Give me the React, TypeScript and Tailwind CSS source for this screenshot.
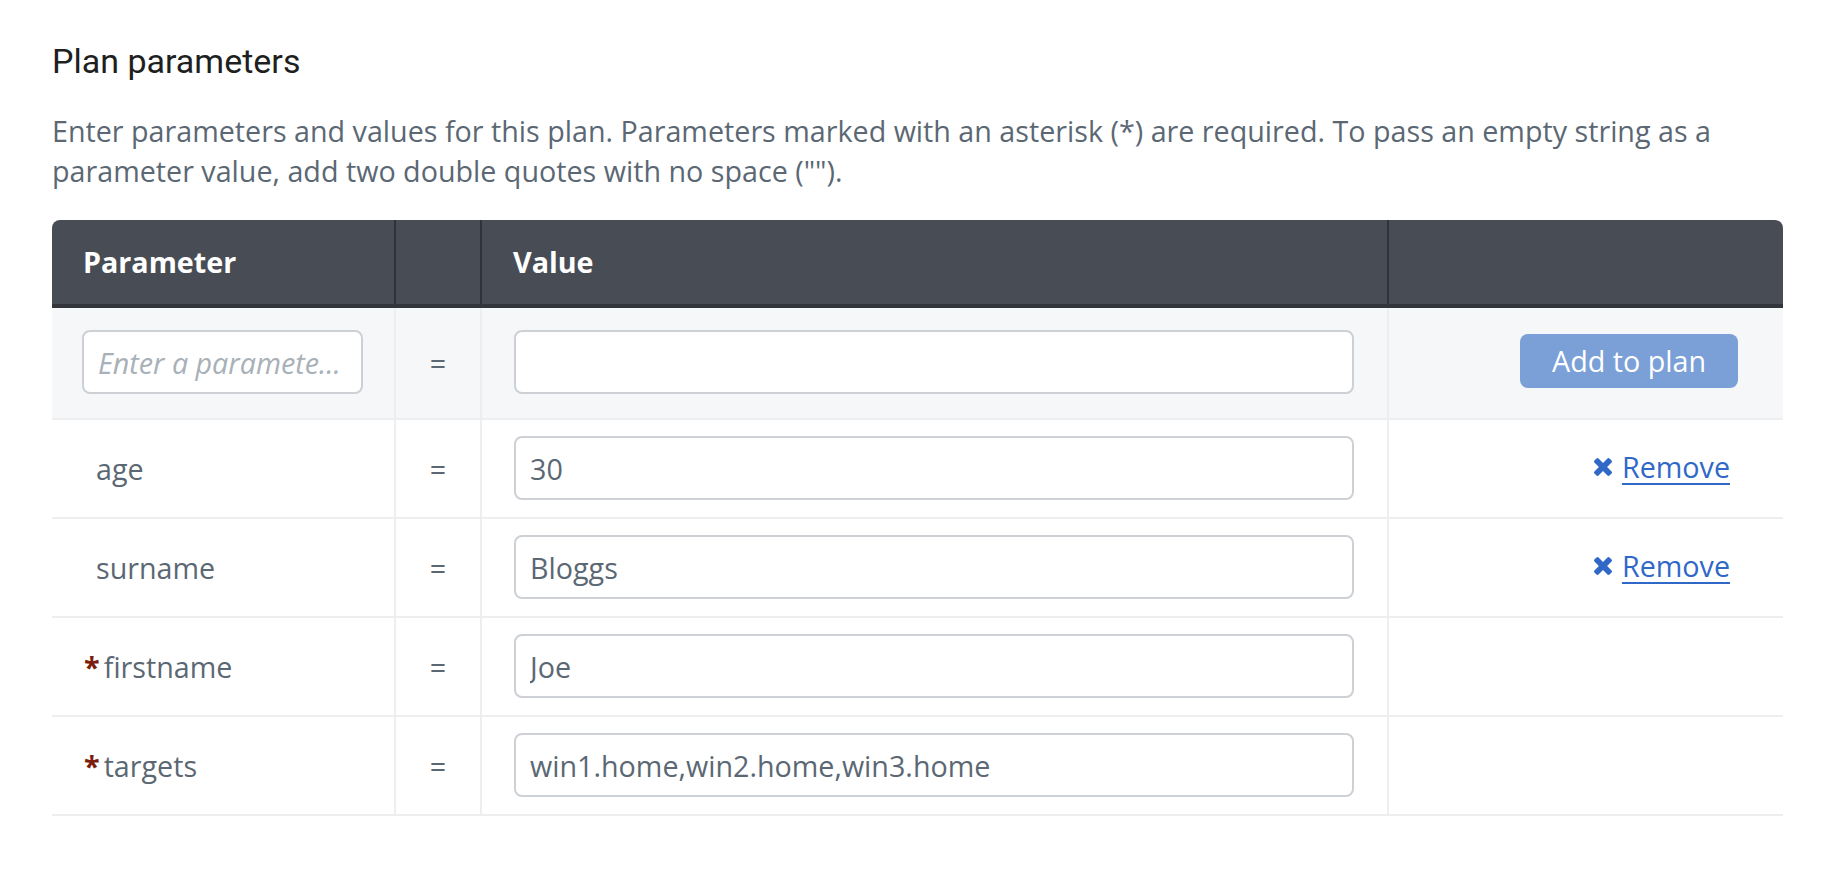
import React from 'react';

interface PlanParam {
  name: string
  value: string
  required?: boolean
  removable?: boolean
}

const params: PlanParam[] = [
  { name: 'age', value: '30', removable: true },
  { name: 'surname', value: 'Bloggs', removable: true },
  { name: 'firstname', value: 'Joe', required: true },
  { name: 'targets', value: 'win1.home,win2.home,win3.home', required: true },
];

const inputCls =
  'w-full h-[64px] bg-white border-2 border-[#cdd1d5] rounded-[8px] px-[14px] text-[28.7px] text-[#5b6874] outline-none';

// heavy "times" glyph
const TimesIcon = () => (
  <svg viewBox="110 104 1188 1188" className="w-[18px] h-[18px]" fill="currentColor">
    <path d="M1298 1060q0 40-28 68l-136 136q-28 28-68 28t-68-28l-294-294-294 294q-28 28-68 28t-68-28l-136-136q-28-28-28-68t28-68l294-294-294-294q-28-28-28-68t28-68l136-136q28-28 68-28t68 28l294 294 294-294q28-28 68-28t68 28l136 136q28 28 28 68t-28 68l-294 294 294 294q28 28 28 68z" />
  </svg>
);

const App: React.FC = () => {
  return (
    <div className="min-h-screen bg-white font-['Open_Sans',sans-serif]">
      <div className="ml-[52px] w-[1731px]">
        <h2 className="pt-[41px] text-[34px] leading-[40px] text-[#1e1f21] font-['Roboto',sans-serif]">
          Plan parameters
        </h2>
        <p className="mt-[30px] text-[28.7px] leading-[40px] text-[#5b6874]">
          Enter parameters and values for this plan. Parameters marked with an asterisk (*) are required. To pass an
          empty string as a parameter value, add two double quotes with no space ("").
        </p>

        <div className="mt-[29px] rounded-t-[8px] overflow-hidden">
          <div className="grid grid-cols-[344px_86px_907px_394px] h-[88px] bg-[#484d55] border-b-4 border-[#32363c] text-white font-bold text-[28.7px]">
            <div className="flex items-center pl-[31px] border-r-2 border-[#30343a]">Parameter</div>
            <div className="border-r-2 border-[#30343a]" />
            <div className="flex items-center pl-[31px] border-r-2 border-[#30343a]">Value</div>
            <div />
          </div>

          <div className="grid grid-cols-[344px_86px_907px_394px] bg-[#f6f7f9] border-b-2 border-[#eceef0] text-[28.7px] text-[#5b6874]">
            <div className="pl-[30px] pr-[31px] pt-[22px] pb-[24px] border-r-2 border-[#eceef0]">
              <input
                className={inputCls + ' truncate placeholder:italic placeholder:text-[#a8b0b8]'}
                placeholder="Enter a parameter name"
              />
            </div>
            <div className="flex items-center justify-center border-r-2 border-[#eceef0]">=</div>
            <div className="pl-[32px] pr-[33px] pt-[22px] pb-[24px] border-r-2 border-[#eceef0]">
              <input className={inputCls} />
            </div>
            <div className="flex items-center justify-end pr-[45px] pb-[4px]">
              <button className="h-[54px] px-[32px] rounded-[8px] bg-[#7b9fd7] text-white text-[28.7px]">
                Add to plan
              </button>
            </div>
          </div>

          {params.map((p) => (
            <div
              key={p.name}
              className="grid grid-cols-[344px_86px_907px_394px] bg-white border-b-2 border-[#eceef0] text-[28.7px] text-[#5b6874]"
            >
              <div
                className={
                  'flex items-center border-r-2 border-[#eceef0] ' + (p.required ? 'pl-[32px]' : 'pl-[44px]')
                }
              >
                {p.required && <span className="text-[#7a1d0c] font-bold mr-[4px]">*</span>}
                {p.name}
              </div>
              <div className="flex items-center justify-center border-r-2 border-[#eceef0]">=</div>
              <div className="pl-[32px] pr-[33px] pt-[16px] pb-[17px] border-r-2 border-[#eceef0]">
                <input className={inputCls} defaultValue={p.value} />
              </div>
              <div className="flex items-center justify-end pr-[53px] pb-[3px]">
                {p.removable && (
                  <a href="#" className="flex items-center gap-[10px] text-[#3068c8]">
                    <TimesIcon />
                    <span className="underline underline-offset-[5px] decoration-2">Remove</span>
                  </a>
                )}
              </div>
            </div>
          ))}
        </div>
      </div>
    </div>
  );
};

export default App;
